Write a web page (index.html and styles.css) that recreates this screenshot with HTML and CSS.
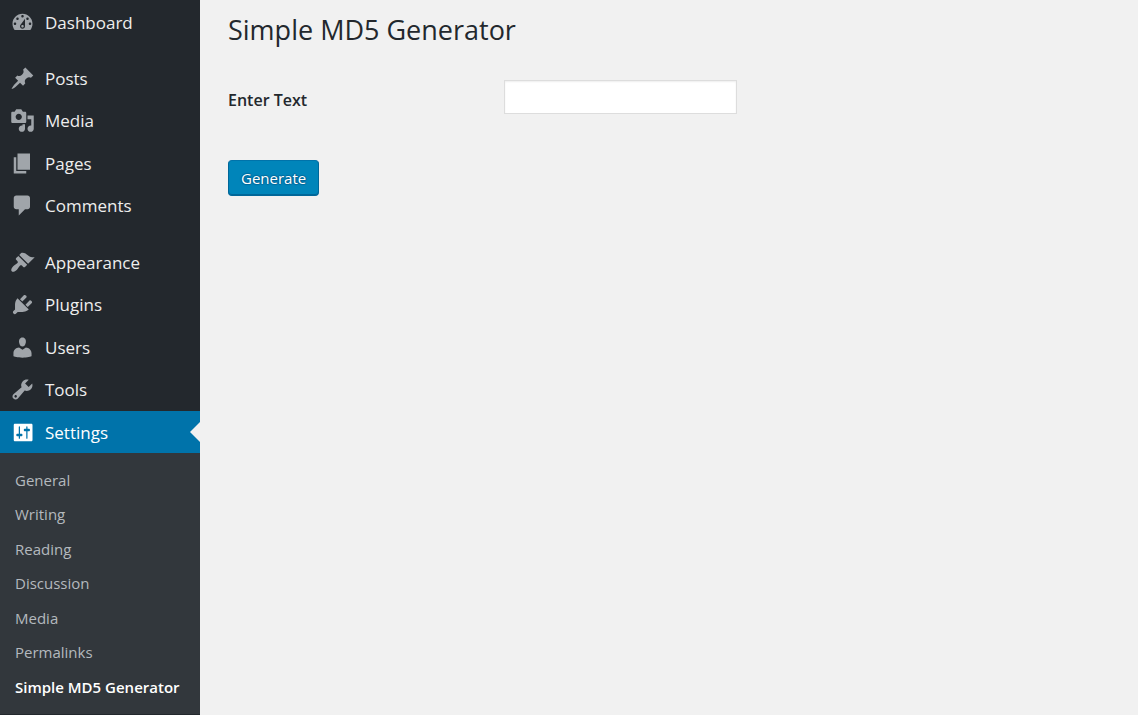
FILE: index.html
```html
<!DOCTYPE html>
<html lang="en">
<head>
<meta charset="utf-8">
<title>Simple MD5 Generator</title>
<link rel="stylesheet" href="styles.css">
</head>
<body>
<div class="layout">
  <nav class="sidebar" aria-label="Main menu">
    <ul class="menu">
      <li><a class="menu-link" href="#"><svg class="icon" viewBox="0 0 20 20" aria-hidden="true"><path d="M3.76 16h12.48c1.1-1.37 1.76-3.11 1.76-5 0-4.42-3.58-8-8-8s-8 3.58-8 8c0 1.89.66 3.63 1.76 5zM10 4c.55 0 1 .45 1 1s-.45 1-1 1-1-.45-1-1 .45-1 1-1zM6 6c.55 0 1 .45 1 1s-.45 1-1 1-1-.45-1-1 .45-1 1-1zm8 0c.55 0 1 .45 1 1s-.45 1-1 1-1-.45-1-1 .45-1 1-1zm-5.37 5.55L12 7v6c0 1.1-.9 2-2 2s-2-.9-2-2c0-.57.24-1.08.63-1.45zM4 10c.55 0 1 .45 1 1s-.45 1-1 1-1-.45-1-1 .45-1 1-1zm12 0c.55 0 1 .45 1 1s-.45 1-1 1-1-.45-1-1 .45-1 1-1zm-5 3c0-.55-.45-1-1-1s-1 .45-1 1 .45 1 1 1 1-.45 1-1z"/></svg>Dashboard</a></li>
    </ul>
    <ul class="menu">
      <li><a class="menu-link" href="#"><svg class="icon" viewBox="0 0 20 20" aria-hidden="true"><path d="M10.44 3.02l1.82-1.82 6.36 6.35-1.83 1.82c-1.05-.68-2.48-.57-3.41.36l-.75.75c-.92.93-1.04 2.35-.35 3.41l-1.83 1.82-2.41-2.41-2.8 2.79c-.42.42-3.38 2.71-3.8 2.29s1.86-3.39 2.28-3.81l2.79-2.79L4.1 9.36l1.83-1.82c1.05.69 2.48.57 3.4-.36l.75-.75c.93-.92 1.05-2.35.36-3.41z"/></svg>Posts</a></li>
      <li><a class="menu-link" href="#"><svg class="icon" viewBox="0 0 20 20" aria-hidden="true"><path d="M13 11V4c0-.55-.45-1-1-1h-1.67L9 1H5L3.67 3H2c-.55 0-1 .45-1 1v7c0 .55.45 1 1 1h10c.55 0 1-.45 1-1zM7 4.5c1.38 0 2.5 1.12 2.5 2.5S8.38 9.5 7 9.5 4.5 8.38 4.5 7 5.62 4.5 7 4.5zM14 6h5v10.5c0 1.38-1.12 2.5-2.5 2.5S14 17.88 14 16.5s1.12-2.5 2.5-2.5c.17 0 .34.02.5.05V9h-3V6zm-4 8.05V13h2v3.5c0 1.38-1.12 2.5-2.5 2.5S7 17.88 7 16.5 8.12 14 9.5 14c.17 0 .34.02.5.05z"/></svg>Media</a></li>
      <li><a class="menu-link" href="#"><svg class="icon" viewBox="0 0 20 20" aria-hidden="true"><path d="M6 15V2h10v13H6zm-1 1h8v2H3V5h2v11z"/></svg>Pages</a></li>
      <li><a class="menu-link" href="#"><svg class="icon" viewBox="0 0 20 20" aria-hidden="true"><path d="M5 2h9c1.1 0 2 .9 2 2v7c0 1.1-.9 2-2 2h-2l-5 5v-5H5c-1.1 0-2-.9-2-2V4c0-1.1.9-2 2-2z"/></svg>Comments</a></li>
    </ul>
    <ul class="menu">
      <li><a class="menu-link" href="#"><svg class="icon" viewBox="0 0 20 20" aria-hidden="true"><path d="M14.48 11.06L7.41 3.99l1.5-1.5c.5-.56 2.3-.47 3.51.32 1.21.8 1.43 1.28 2.91 2.1 1.18.64 2.45 1.26 4.45.85zm-.71.71L6.7 4.7 4.93 6.47c-.39.39-.39 1.02 0 1.41l1.06 1.06c.39.39.39 1.03 0 1.42-.6.6-1.43 1.11-2.21 1.69-.35.26-.7.53-1.01.84C1.43 14.23.4 16.08 1.4 17.07c.99 1 2.84-.03 4.18-1.36.31-.31.58-.66.85-1.02.57-.78 1.08-1.61 1.69-2.21.39-.39 1.02-.39 1.41 0l1.06 1.06c.39.39 1.02.39 1.41 0z"/></svg>Appearance</a></li>
      <li><a class="menu-link" href="#"><svg class="icon" viewBox="0 0 20 20" aria-hidden="true"><path d="M13.11 4.36L9.87 7.6 8 5.73l3.24-3.24c.35-.34 1.05-.2 1.56.32.52.51.66 1.21.31 1.55zm-8 1.77l.91-1.12 9.01 9.01-1.19.84c-.71.71-2.63 1.16-3.82 1.16H6.14L4.9 17.26c-.59.59-1.54.59-2.12 0-.59-.58-.59-1.53 0-2.12l1.24-1.24v-3.88c0-1.13.4-3.19 1.09-3.89zm7.26 3.97l3.24-3.24c.34-.35 1.04-.21 1.55.31.52.51.66 1.21.31 1.55l-3.24 3.25z"/></svg>Plugins</a></li>
      <li><a class="menu-link" href="#"><svg class="icon" viewBox="0 0 20 20" aria-hidden="true"><path d="M10 9.25c-2.27 0-2.73-3.44-2.73-3.44C7 4.02 7.82 2 9.97 2c2.16 0 2.98 2.02 2.71 3.81 0 0-.41 3.44-2.68 3.44zm0 2.57L12.72 10c2.39 0 4.52 2.33 4.52 4.53v2.49s-3.65 1.13-7.24 1.13c-3.65 0-7.24-1.13-7.24-1.13v-2.49c0-2.25 1.94-4.48 4.47-4.48z"/></svg>Users</a></li>
      <li><a class="menu-link" href="#"><svg class="icon" viewBox="0 0 20 20" aria-hidden="true"><path d="M16.68 9.77c-1.34 1.34-3.3 1.67-4.95.99l-5.41 6.52c-.99.99-2.59.99-3.58 0s-.99-2.59 0-3.57l6.52-5.42c-.68-1.65-.35-3.61.99-4.95 1.28-1.28 3.12-1.62 4.72-1.06l-2.89 2.89 2.82 2.82 2.86-2.87c.53 1.58.18 3.39-1.08 4.65zM3.81 16.21c.4.39 1.04.39 1.43 0 .4-.4.4-1.04 0-1.43-.39-.4-1.03-.4-1.43 0-.39.39-.39 1.03 0 1.43z"/></svg>Tools</a></li>
      <li><a class="menu-link menu-link-current" href="#"><svg class="icon" viewBox="0 0 20 20" aria-hidden="true"><path d="M18 16V4c0-.55-.45-1-1-1H4c-.55 0-1 .45-1 1v12c0 .55.45 1 1 1h13c.55 0 1-.45 1-1zM8 11h1c.55 0 1 .45 1 1s-.45 1-1 1H8v1.5c0 .28-.22.5-.5.5s-.5-.22-.5-.5V13H6c-.55 0-1-.45-1-1s.45-1 1-1h1V5.5c0-.28.22-.5.5-.5s.5.22.5.5V11zm5-2h-1c-.55 0-1-.45-1-1s.45-1 1-1h1V5.5c0-.28.22-.5.5-.5s.5.22.5.5V7h1c.55 0 1 .45 1 1s-.45 1-1 1h-1v5.5c0 .28-.22.5-.5.5s-.5-.22-.5-.5V9z"/></svg>Settings</a></li>
    </ul>
    <ul class="submenu">
      <li><a class="submenu-link" href="#">General</a></li>
      <li><a class="submenu-link" href="#">Writing</a></li>
      <li><a class="submenu-link" href="#">Reading</a></li>
      <li><a class="submenu-link" href="#">Discussion</a></li>
      <li><a class="submenu-link" href="#">Media</a></li>
      <li><a class="submenu-link" href="#">Permalinks</a></li>
      <li><a class="submenu-link submenu-link-current" href="#" aria-current="page">Simple MD5 Generator</a></li>
    </ul>
  </nav>
  <main class="content">
    <h1 class="title">Simple MD5 Generator</h1>
    <form class="form">
      <div class="field">
        <label class="label" for="text">Enter Text</label>
        <input class="input" id="text" type="text">
      </div>
      <button class="button" type="button">Generate</button>
    </form>
  </main>
</div>
</body>
</html>
```
FILE: styles.css
```css
* {
  box-sizing: border-box;
}

body {
  margin: 0;
  background: #f1f1f1;
  color: #23282d;
  font-family: "Segoe UI", "Open Sans", "Noto Sans", sans-serif;
  font-size: 17px;
}

.layout {
  display: grid;
  grid-template-columns: 200px 1fr;
  min-height: 100vh;
}

.sidebar {
  padding-top: 1px;
  background: #23282d;
}

.menu,
.submenu {
  display: grid;
  margin: 0;
  padding: 0;
  list-style: none;
}

.menu {
  grid-auto-rows: 42px 43px;
}

.menu + .menu {
  margin-top: 14px;
}

.menu-link {
  position: relative;
  display: flex;
  align-items: center;
  gap: 10px;
  height: 42px;
  padding-left: 10px;
  color: #eee;
  text-decoration: none;
}

.icon {
  flex: none;
  width: 25px;
  height: 25px;
  fill: #a0a5aa;
  fill-rule: evenodd;
}

.menu-link-current {
  background: #0073aa;
  color: #fff;
}

.menu-link-current .icon {
  fill: #fff;
}

.menu-link-current::after {
  content: "";
  position: absolute;
  top: 50%;
  right: 0;
  border: 10px solid transparent;
  border-right-color: #f1f1f1;
  border-left-width: 0;
  transform: translateY(-50%);
}

.submenu {
  grid-auto-rows: 34px 35px;
  padding: 10px 0;
  background: #32373c;
}

.submenu-link {
  display: flex;
  align-items: center;
  height: 34px;
  padding-left: 15px;
  color: #b4b9be;
  font-size: 15px;
  text-decoration: none;
  white-space: nowrap;
}

.submenu-link-current {
  color: #fff;
  font-weight: 600;
}

.content {
  padding: 10px 28px;
}

.title {
  margin: 0;
  font-size: 27px;
  font-weight: 400;
  line-height: 40px;
}

.form {
  margin-top: 30px;
}

.field {
  display: grid;
  grid-template-columns: 276px 1fr;
  align-items: start;
}

.label {
  padding-top: 8px;
  font-size: 16px;
  font-weight: 600;
  line-height: 24px;
}

.input {
  width: 233px;
  height: 34px;
  padding: 4px 6px;
  border: 1px solid #ddd;
  background: #fff;
  box-shadow: inset 0 1px 2px rgba(0, 0, 0, 0.07);
  color: #32373c;
  font: inherit;
}

.button {
  height: 36px;
  margin-top: 46px;
  padding: 0 12px;
  border: 1px solid #006799;
  border-top-color: #0073aa;
  border-radius: 4px;
  background: #0085ba;
  box-shadow: inset 0 -1px 0 #006799;
  color: #fff;
  font-family: inherit;
  font-size: 15px;
  text-shadow: 0 -1px 1px #006799, 1px 0 1px #006799, 0 1px 1px #006799, -1px 0 1px #006799;
}
```
